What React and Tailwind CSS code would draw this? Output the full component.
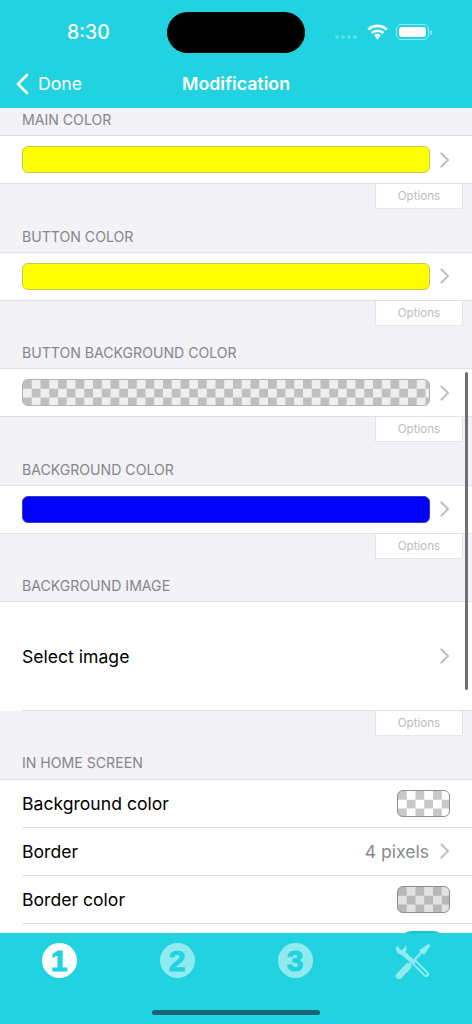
import React from 'react';

const chevron = (
  <svg width="10" height="16" viewBox="0 0 10 16" fill="none" className="shrink-0">
    <path d="M1.5 1.5 L8 8 L1.5 14.5" stroke="#c2c2c6" strokeWidth="2.2" strokeLinecap="round" strokeLinejoin="round" />
  </svg>
);

const ColorSection = ({ label, barClass }) => (
  <div className="h-[116.5px]">
    <div className="h-[32px] pl-[22px] text-[14.1px] leading-[33px] text-[#86868b]">{label}</div>
    <div className="h-[49px] bg-white border-y border-[#e2e2e6] pl-[22px] pr-[22px] flex items-center gap-[10px]">
      <div className={`flex-1 h-[27px] rounded-[6px] border ${barClass}`}></div>
      {chevron}
    </div>
    <Options />
  </div>
);

const Options = () => (
  <div className="flex justify-end pr-[9px]">
    <div className="w-[88px] h-[25px] bg-white border-x border-b border-[#e6e6ea] text-[11.6px] leading-[24px] text-center text-[#bcbcc0]">
      Options
    </div>
  </div>
);

const HomeRow = ({ label, children }) => (
  <div className="h-[48px] pl-[22px] flex">
    <div className="flex-1 border-b border-[#e2e2e6] pr-[22px] flex items-center justify-between">
      <span className="text-[17.6px] text-black pt-[2px]">{label}</span>
      {children}
    </div>
  </div>
);

const NumberTab = ({ n, active }) => (
  <div className={`w-[35px] h-[35px] rounded-full flex items-center justify-center ${active ? 'bg-white' : 'bg-[#90ebf1]'}`}>
    <span className="text-[30px] leading-none font-black text-[#21d3e0] [-webkit-text-stroke:1px_#21d3e0] font-['Liberation_Sans',sans-serif]">{n}</span>
  </div>
);

export default function App() {
  return (
    <div className="w-[472px] h-[1024px] overflow-hidden relative flex flex-col bg-[#f2f2f7] font-['Inter','Noto_Sans',sans-serif]">
      {/* status + nav bar */}
      <div className="h-[108px] shrink-0 bg-[#21d3e0] relative z-10 text-white">
        <div className="absolute left-[67px] top-[20px] text-[19.4px] leading-[24px] font-medium">8:30</div>
        <div className="absolute left-[167px] top-[12px] w-[138px] h-[41px] rounded-full bg-black"></div>
        <div className="absolute left-[335px] top-[35px] flex gap-[2px]">
          <i className="w-[4px] h-[4px] rounded-full bg-white/25"></i>
          <i className="w-[4px] h-[4px] rounded-full bg-white/25"></i>
          <i className="w-[4px] h-[4px] rounded-full bg-white/25"></i>
          <i className="w-[4px] h-[4px] rounded-full bg-white/25"></i>
        </div>
        <svg className="absolute left-[367px] top-[24px]" width="21" height="16" viewBox="0 0 21 16" fill="none" stroke="white" strokeWidth="2.6">
          <path d="M1.2 5.6 C6.6 0.6 14.4 0.6 19.8 5.6" />
          <path d="M4.6 9 C8 5.9 13 5.9 16.4 9" />
          <path d="M8 12.2 C9.5 11 11.5 11 13 12.2" />
          <path d="M10.5 15.8 L8.6 13.6 C9.8 12.8 11.2 12.8 12.4 13.6 Z" fill="white" stroke="none" />
        </svg>
        <div className="absolute left-[396px] top-[24px] w-[33px] h-[16px] rounded-[5px] border border-white/50 p-[2px]">
          <div className="w-full h-full rounded-[3px] bg-white"></div>
        </div>
        <div className="absolute left-[430px] top-[30px] w-[1.5px] h-[5px] rounded-r bg-white/50"></div>

        <svg className="absolute left-[15px] top-[73px]" width="14" height="22" viewBox="0 0 14 22" fill="none">
          <path d="M12 2 L3 11 L12 20" stroke="white" strokeWidth="2.6" strokeLinecap="round" strokeLinejoin="round" />
        </svg>
        <div className="absolute left-[38px] top-[71px] text-[17.7px] leading-[26px]">Done</div>
        <div className="absolute left-0 right-0 top-[70px] text-center text-[17.8px] leading-[27px] font-semibold">Modification</div>
      </div>

      {/* scrolled list */}
      <div className="flex-1 relative overflow-hidden -mt-[4.9px] z-0">
        <ColorSection label="MAIN COLOR" barClass="bg-[#ffff00] border-[#c9c94a]" />
        <ColorSection label="BUTTON COLOR" barClass="bg-[#ffff00] border-[#c9c94a]" />
        <ColorSection label="BUTTON BACKGROUND COLOR" barClass="bg-[repeating-conic-gradient(#efefef_0_25%,#bfbfbf_0_50%)] bg-[length:17.5px_17.5px] border-[#b4b4b4]" />
        <ColorSection label="BACKGROUND COLOR" barClass="bg-[#0000ff] border-[#3a3ac0]" />

        <div className="h-[32px] pl-[22px] text-[14.1px] leading-[33px] text-[#86868b]">BACKGROUND IMAGE</div>
        <div className="h-[110px] bg-white border-t border-[#e2e2e6] pl-[22px] flex">
          <div className="flex-1 border-b border-[#e2e2e6] pr-[22px] flex items-center justify-between">
            <span className="text-[17.6px] text-black pt-[3px]">Select image</span>
            {chevron}
          </div>
        </div>
        <Options />

        <div className="h-[42.5px] pl-[22px] pt-[15px] text-[14.1px] leading-[24px] text-[#86868b]">IN HOME SCREEN</div>
        <div className="bg-white border-t border-[#e2e2e6]">
          <HomeRow label="Background color">
            <div className="w-[53px] h-[27px] rounded-[6px] border border-[#8e8e8e] bg-[repeating-conic-gradient(#ffffff_0_25%,#c8c8c8_0_50%)] bg-[length:17.5px_17.5px]"></div>
          </HomeRow>
          <HomeRow label="Border">
            <span className="ml-auto text-[17.6px] text-[#8a8a8e] mr-[11px] pt-[2px]">4 pixels</span>
            {chevron}
          </HomeRow>
          <HomeRow label="Border color">
            <div className="w-[53px] h-[27px] rounded-[6px] border border-[#8e8e8e] bg-[repeating-conic-gradient(#e2e2e2_0_25%,#b8b8b8_0_50%)] bg-[length:17.5px_17.5px]"></div>
          </HomeRow>
          <div className="h-[48px] pr-[24px] pt-[7px] flex justify-end">
            <div className="w-[51px] h-[31px] rounded-full bg-[#1fbfcc]"></div>
          </div>
        </div>

        {/* scroll indicator */}
        <div className="absolute left-[465px] top-[268.9px] w-[3px] h-[318px] rounded-full bg-[#6f6f73]"></div>
      </div>

      {/* tab bar */}
      <div className="h-[91px] shrink-0 bg-[#21d3e0] relative z-10">
        <div className="grid grid-cols-4 pt-[10px]">
          <div className="flex justify-center"><NumberTab n="1" active /></div>
          <div className="flex justify-center"><NumberTab n="2" /></div>
          <div className="flex justify-center"><NumberTab n="3" /></div>
          <div className="flex justify-center pr-[1px]">
            <svg width="36" height="36" viewBox="0 0 36 36" fill="none" strokeLinecap="round">
              <path d="M4 33 L13 23.5" stroke="#90ebf1" strokeWidth="6.5" />
              <path d="M13 23.5 L26 10" stroke="#90ebf1" strokeWidth="2.4" />
              <path d="M24 7.5 L32.5 1.5 C34.5 0.8 35.5 2 35 3.5 L29 12 Z" fill="#90ebf1" />
              <path d="M1 5.2 C0.8 8.5 3.5 11.5 7 11.5 L11.2 8 C12 6.5 11.6 3.5 10 2 L9.8 4.6 L6.6 7.2 L3.4 4.6 L3.2 2.4 C2 3 1.2 4 1 5.2 Z" fill="#90ebf1" stroke="none" />
              <path d="M7 9 L17 18" stroke="#90ebf1" strokeWidth="4.5" strokeLinecap="butt" />
              <path d="M20.5 20.5 L31 31" stroke="#90ebf1" strokeWidth="6" />
              <path d="M20.5 20.5 L31 31" stroke="#21d3e0" strokeWidth="1.8" />
            </svg>
          </div>
        </div>
        <div className="absolute left-[152px] bottom-[9px] w-[168px] h-[5px] rounded-full bg-[#1a6670]"></div>
      </div>
    </div>
  );
}
